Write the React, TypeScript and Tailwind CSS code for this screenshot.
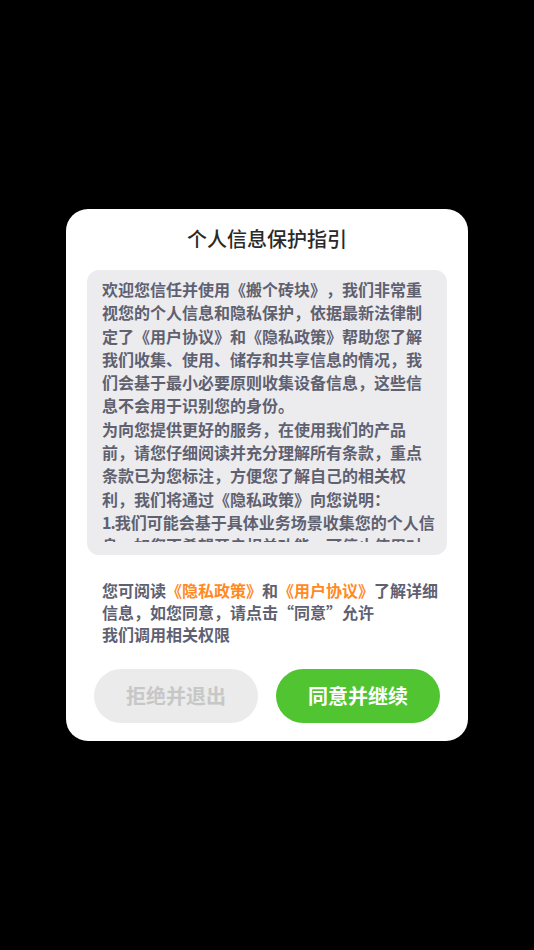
import React from "react";

export default function App() {
  const font = { fontFamily: '"Noto Sans CJK SC", "Noto Sans", sans-serif' };
  return (
    <div className="w-[534px] h-[950px] bg-black flex items-center justify-center [text-spacing-trim:space-all]" style={font}>
      <div className="w-[402px] h-[532px] bg-white rounded-[22px] flex flex-col">
        <div className="h-[61px] flex items-center justify-center pb-[2px] text-[20px] font-medium text-[#2a2a2a]">
          个人信息保护指引
        </div>
        <div className="mx-[21px] h-[285px] bg-[#ececee] rounded-[12px] pl-[15px] pr-[11px] pt-[8px]">
          <div className="h-[264px] overflow-hidden text-[16px] leading-[23.3px] font-semibold text-[#5f6171]">
            <p>欢迎您信任并使用《搬个砖块》，我们非常重视您的个人信息和隐私保护，依据最新法律制定了《用户协议》和《隐私政策》帮助您了解我们收集、使用、储存和共享信息的情况，我们会基于最小必要原则收集设备信息，这些信息不会用于识别您的身份。</p>
            <p>为向您提供更好的服务，在使用我们的产品前，请您仔细阅读并充分理解所有条款，重点条款已为您标注，方便您了解自己的相关权利，我们将通过《隐私政策》向您说明：</p>
            <p><span className="tracking-[-1px]">1.</span>我们可能会基于具体业务场景收集您的个人信息，如您不希望开启相关功能，可停止使用对应服务，我们将不会开启与用户使用的服务无关的功能。</p>
          </div>
        </div>
        <div className="pl-[36px] pr-[26px] pt-[24px] text-[16px] leading-[22px] font-semibold text-[#5f6171]">
          <p>
            您可阅读<span className="text-[#ff8a1f]">《隐私政策》</span>和<span className="text-[#ff8a1f]">《用户协议》</span>了解详细信息，如您同意，请点击“同意”允许
          </p>
          <p>我们调用相关权限</p>
        </div>
        <div className="flex gap-[18px] px-[28px] mt-auto mb-[18px]">
          <button className="w-[164px] h-[54px] rounded-full bg-[#ebebeb] text-[#c7c7c7] text-[20px] font-semibold">
            拒绝并退出
          </button>
          <button className="w-[164px] h-[54px] rounded-full bg-[#50c431] text-white text-[20px] font-semibold">
            同意并继续
          </button>
        </div>
      </div>
    </div>
  );
}
